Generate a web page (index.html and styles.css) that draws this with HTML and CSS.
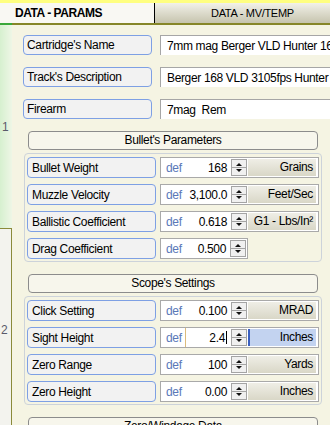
FILE: index.html
```html
<!DOCTYPE html>
<html lang="en">
<head>
  <meta charset="UTF-8">
  <title>Ballistics - Data Params</title>
  <link rel="stylesheet" href="styles.css">
</head>
<body>
  <div class="topbar"></div>
  <div class="tabs">
    <div class="tab tab-active">DATA - PARAMS</div>
    <div class="tab tab-other">DATA - MV/TEMP</div>
  </div>
  <div class="tabline"></div>

  <div class="main">
    <div class="side">
      <div class="side-top">1</div>
      <div class="side-bottom">2</div>
    </div>

    <div class="content">
      <div class="field">
        <div class="label">Cartridge's Name</div>
        <div class="text">7mm mag Berger VLD Hunter 168</div>
      </div>
      <div class="field">
        <div class="label">Track's Description</div>
        <div class="text">Berger 168 VLD 3105fps Hunter 7mm</div>
      </div>
      <div class="field">
        <div class="label">Firearm</div>
        <div class="text">7mag&nbsp; Rem</div>
      </div>

      <!-- Bullet -->
      <div class="group-title">Bullet's Parameters</div>
      <div class="group">
        <div class="param">
          <div class="label">Bullet Weight</div>
          <div class="entry">
            <div class="num"><span class="def">def</span><span class="val">168</span></div>
            <div class="spin"><svg width="14" height="15" viewBox="0 0 14 15"><polygon points="4,6 7,3 10,6" /><line x1="0" y1="7.5" x2="14" y2="7.5" /><polygon points="4,9 10,9 7,12" /></svg></div>
            <div class="unit">Grains</div>
          </div>
        </div>
        <div class="param">
          <div class="label">Muzzle Velocity</div>
          <div class="entry">
            <div class="num"><span class="def">def</span><span class="val">3,100.0</span></div>
            <div class="spin"><svg width="14" height="15" viewBox="0 0 14 15"><polygon points="4,6 7,3 10,6" /><line x1="0" y1="7.5" x2="14" y2="7.5" /><polygon points="4,9 10,9 7,12" /></svg></div>
            <div class="unit">Feet/Sec</div>
          </div>
        </div>
        <div class="param">
          <div class="label">Ballistic Coefficient</div>
          <div class="entry">
            <div class="num"><span class="def">def</span><span class="val">0.618</span></div>
            <div class="spin"><svg width="14" height="15" viewBox="0 0 14 15"><polygon points="4,6 7,3 10,6" /><line x1="0" y1="7.5" x2="14" y2="7.5" /><polygon points="4,9 10,9 7,12" /></svg></div>
            <div class="unit">G1 - Lbs/In²</div>
          </div>
        </div>
        <div class="param">
          <div class="label">Drag Coefficient</div>
          <div class="entry entry-short">
            <div class="num"><span class="def">def</span><span class="val">0.500</span></div>
            <div class="spin"><svg width="14" height="15" viewBox="0 0 14 15"><polygon points="4,6 7,3 10,6" /><line x1="0" y1="7.5" x2="14" y2="7.5" /><polygon points="4,9 10,9 7,12" /></svg></div>
          </div>
        </div>
      </div>

      <!-- Scope -->
      <div class="group-title">Scope's Settings</div>
      <div class="group">
        <div class="param">
          <div class="label">Click Setting</div>
          <div class="entry">
            <div class="num"><span class="def">def</span><span class="val">0.100</span></div>
            <div class="spin"><svg width="14" height="15" viewBox="0 0 14 15"><polygon points="4,6 7,3 10,6" /><line x1="0" y1="7.5" x2="14" y2="7.5" /><polygon points="4,9 10,9 7,12" /></svg></div>
            <div class="unit">MRAD</div>
          </div>
        </div>
        <div class="param">
          <div class="label">Sight Height</div>
          <div class="entry">
            <div class="num num-focus"><span class="def">def</span><span class="val">2.4<span class="caret"></span></span></div>
            <div class="spin"><svg width="14" height="15" viewBox="0 0 14 15"><polygon points="4,6 7,3 10,6" /><line x1="0" y1="7.5" x2="14" y2="7.5" /><polygon points="4,9 10,9 7,12" /></svg></div>
            <div class="unit unit-focus">Inches</div>
          </div>
        </div>
        <div class="param">
          <div class="label">Zero Range</div>
          <div class="entry">
            <div class="num"><span class="def">def</span><span class="val">100</span></div>
            <div class="spin"><svg width="14" height="15" viewBox="0 0 14 15"><polygon points="4,6 7,3 10,6" /><line x1="0" y1="7.5" x2="14" y2="7.5" /><polygon points="4,9 10,9 7,12" /></svg></div>
            <div class="unit">Yards</div>
          </div>
        </div>
        <div class="param">
          <div class="label">Zero Height</div>
          <div class="entry">
            <div class="num"><span class="def">def</span><span class="val">0.00</span></div>
            <div class="spin"><svg width="14" height="15" viewBox="0 0 14 15"><polygon points="4,6 7,3 10,6" /><line x1="0" y1="7.5" x2="14" y2="7.5" /><polygon points="4,9 10,9 7,12" /></svg></div>
            <div class="unit">Inches</div>
          </div>
        </div>
      </div>

      <div class="group-title">Zero/Windage Data</div>
    </div>
  </div>
</body>
</html>
```

FILE: styles.css
```css
body {
  margin: 0;
  width: 330px;
  height: 425px;
  overflow: hidden;
  background: #f5f4e3;
  font-family: 'Liberation Sans', Arial, sans-serif;
  font-size: 12px;
  letter-spacing: -0.35px;
  color: #000;
}

.topbar {
  height: 3px;
  background: #ffff80;
}

.tabs {
  display: flex;
  height: 20px;
}

.tab {
  display: flex;
  align-items: center;
  white-space: nowrap;
}

.tab-active {
  width: 154px;
  padding-left: 15px;
  box-sizing: border-box;
  background: #f9f8f3;
  font-weight: bold;
  letter-spacing: -0.45px;
}

.tab-other {
  flex: 1;
  padding-left: 56px;
  border-left: 1px solid #000;
  background: linear-gradient(#f2f1e9, #c6c4ae);
  font-size: 11px;
  letter-spacing: -0.3px;
}

.tabline {
  height: 2px;
  background: linear-gradient(to right, #3aa83a 12px, #868628 12px);
}

.main {
  display: flex;
}

.side {
  width: 12px;
  flex-shrink: 0;
  display: flex;
  flex-direction: column;
  color: #5a5a6a;
}

.side-top {
  height: 203px;
  padding-left: 2px;
  display: flex;
  align-items: center;
  background: linear-gradient(to right, #d6f0cf, #eef6e6);
}

.side-bottom {
  height: 220px;
  padding: 94px 0 0 1px;
  box-sizing: border-box;
  border-top: 1px solid #8a8a3a;
  border-right: 1px solid #8a8a3a;
  background: #f3f3ee;
}

.content {
  flex: 1;
  min-width: 0;
  padding: 10px 0 0 11px;
  overflow: hidden;
}

.field {
  display: flex;
  gap: 8px;
  height: 20px;
  margin-bottom: 12px;
}

.label {
  width: 129px;
  flex-shrink: 0;
  box-sizing: border-box;
  padding-left: 3px;
  border: 1px solid #7ea0e4;
  border-radius: 4px;
  background: #f2f2f2;
  display: flex;
  align-items: center;
  white-space: nowrap;
}

.text {
  width: 200px;
  flex-shrink: 0;
  padding-left: 6px;
  border-top: 1px solid #a6a6a6;
  border-left: 1px solid #a6a6a6;
  background: #fff;
  display: flex;
  align-items: center;
  white-space: nowrap;
}

.group-title {
  width: 290px;
  height: 19px;
  margin-left: 5px;
  box-sizing: border-box;
  border: 1px solid #8c8c8c;
  border-radius: 4px;
  background: #f7f6ec;
  text-align: center;
  line-height: 17px;
}

.group {
  width: 298px;
  margin: 3px 0 12px 1px;
  padding: 3px 2px 2px;
  box-sizing: border-box;
  border: 1px solid #cdd3da;
  border-radius: 4px;
  display: flex;
  flex-direction: column;
  gap: 6px;
}

.param {
  display: flex;
  gap: 4px;
  height: 21px;
}

.param .label {
  padding-left: 4px;
}

.entry {
  width: 159px;
  box-sizing: border-box;
  padding-right: 2px;
  border: 1px solid #a9a9a9;
  background: #fff;
  display: flex;
  align-items: center;
}

.entry-short {
  width: 88px;
  padding-right: 0;
}

.num {
  width: 70px;
  height: 100%;
  box-sizing: border-box;
  padding: 0 4px 0 5px;
  display: flex;
  align-items: center;
}

.def {
  color: #5a78b8;
}

.val {
  margin-left: auto;
  white-space: nowrap;
}

.num-focus {
  padding-right: 0;
}

.num-focus .val {
  flex: 1;
  height: 100%;
  margin-left: 3px;
  padding-right: 4px;
  border-left: 1px solid #dcbc7c;
  display: flex;
  align-items: center;
  justify-content: flex-end;
}

.caret {
  width: 0;
  height: 13px;
  margin-left: 1px;
  border-right: 1px solid #000;
}

.spin {
  width: 16px;
  height: 17px;
  margin-right: 1px;
  flex-shrink: 0;
  box-sizing: border-box;
  border: 1px solid #a4a4a4;
  background: #f0f0f0;
}

.spin svg {
  display: block;
}

.spin polygon {
  fill: #111;
}

.spin line {
  stroke: #a4a4a4;
  stroke-width: 1;
}

.unit {
  width: 68px;
  height: 17px;
  box-sizing: border-box;
  padding-right: 3px;
  background: linear-gradient(#efeee6, #d9d7c7);
  text-align: right;
  line-height: 17px;
  white-space: nowrap;
}

.unit-focus {
  background: #c3d3f0;
  border-left: 2px solid #3a5fc0;
}
```
